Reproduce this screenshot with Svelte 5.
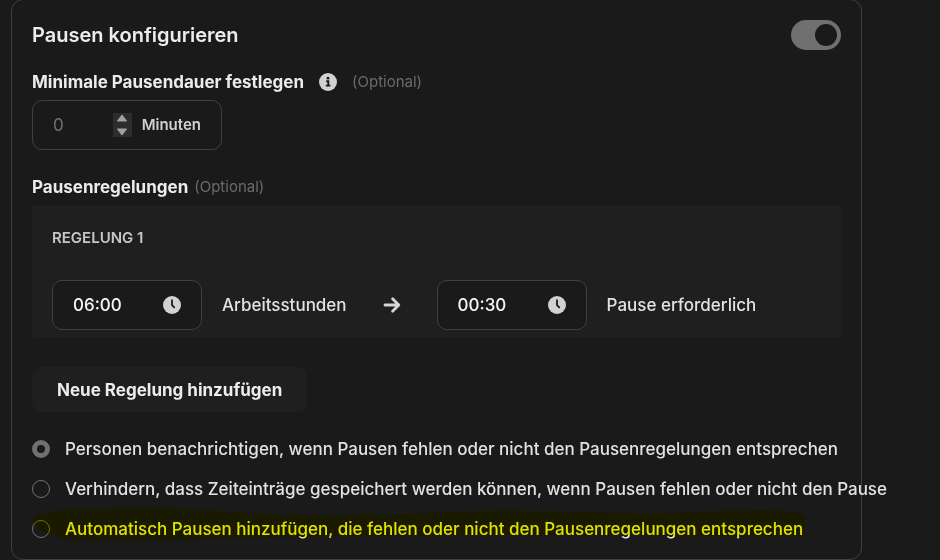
<script lang="ts">
	let enabled = $state(true);
	let minimum = $state<number | null>(null);
	let action = $state('notify');

	const rules = [{ hours: '06:00', pause: '00:30' }];

	const actions = [
		{
			value: 'notify',
			label: 'Personen benachrichtigen, wenn Pausen fehlen oder nicht den Pausenregelungen entsprechen'
		},
		{
			value: 'prevent',
			label: 'Verhindern, dass Zeiteinträge gespeichert werden können, wenn Pausen fehlen oder nicht den Pause'
		},
		{
			value: 'auto',
			label: 'Automatisch Pausen hinzufügen, die fehlen oder nicht den Pausenregelungen entsprechen',
			marked: true
		}
	];

	function step(amount: number) {
		minimum = Math.max(0, (minimum ?? 0) + amount);
	}
</script>

{#snippet timeField(value: string, label: string)}
	<div class="field time">
		<input type="text" {value} aria-label={label} />
		<svg class="icon" viewBox="0 0 18 18" aria-hidden="true">
			<circle cx="9" cy="9" r="9" fill="#d2d2d2" />
			<path d="M9 4.2V9.2L11.2 11.4" fill="none" stroke="#1a1a1a" stroke-width="1.8" stroke-linecap="round" stroke-linejoin="round" />
		</svg>
	</div>
{/snippet}

<div class="page">
	<section class="card">
		<header>
			<h2>Pausen konfigurieren</h2>
			<input class="toggle" type="checkbox" bind:checked={enabled} aria-label="Pausen konfigurieren" />
		</header>

		<div class="label-row">
			<label for="minimum">Minimale Pausendauer festlegen</label>
			<svg class="icon info" viewBox="0 0 18 18" aria-hidden="true">
				<circle cx="9" cy="9" r="9" fill="#d2d2d2" />
				<circle cx="9" cy="5.2" r="1.4" fill="#1a1a1a" />
				<path d="M7.2 8.2H9.3V12.6M6.8 12.6H11.4" fill="none" stroke="#1a1a1a" stroke-width="1.9" />
			</svg>
			<span class="optional">(Optional)</span>
		</div>
		<div class="field minutes">
			<input id="minimum" type="number" min="0" placeholder="0" bind:value={minimum} />
			<div class="stepper">
				<button type="button" aria-label="Mehr" onclick={() => step(1)}>
					<svg viewBox="0 0 12 8"><path d="M6 1L10.6 7H1.4Z" /></svg>
				</button>
				<button type="button" aria-label="Weniger" onclick={() => step(-1)}>
					<svg viewBox="0 0 12 8"><path d="M6 7L10.6 1H1.4Z" /></svg>
				</button>
			</div>
			<span class="unit">Minuten</span>
		</div>

		<div class="label-row rules-label">
			<h3>Pausenregelungen</h3>
			<span class="optional">(Optional)</span>
		</div>
		{#each rules as rule, i}
			<div class="rule">
				<h4>REGELUNG {i + 1}</h4>
				<div class="rule-row">
					{@render timeField(rule.hours, 'Arbeitsstunden')}
					<span>Arbeitsstunden</span>
					<svg class="arrow" viewBox="0 0 18 18" aria-hidden="true">
						<path d="M2 9H15.4M9.6 2.8L15.8 9L9.6 15.2" />
					</svg>
					{@render timeField(rule.pause, 'Pause erforderlich')}
					<span>Pause erforderlich</span>
				</div>
			</div>
		{/each}

		<button class="add" type="button">Neue Regelung hinzufügen</button>

		<div class="actions" role="radiogroup" aria-label="Pausenregelungen">
			{#each actions as item (item.value)}
				<label class="action">
					<input type="radio" name="action" value={item.value} bind:group={action} />
					<span>{item.label}</span>
					{#if item.marked}
						<svg class="marker" viewBox="0 0 790 36" preserveAspectRatio="none" aria-hidden="true">
							<path d="M2 10C14 5 30 2 60 2C110 1 160 1 205 5C260 9 320 8 380 7C440 3 520 3 600 6C650 8 690 3 745 3Q786 3 788 10V24Q788 30 780 30H680L600 28H420L300 30L180 32C120 34 70 34 40 33C28 32 26 28 14 26C4 22 0 14 2 10Z" />
						</svg>
					{/if}
				</label>
			{/each}
		</div>
	</section>
</div>

<style>
	:global(body) {
		background: #1a1a1a;
	}

	.page {
		height: 100vh;
		overflow: hidden;
		background: #1a1a1a;
		color: #e2e2e2;
		font-family: Inter, 'Liberation Sans', sans-serif;
		font-size: 17px;
		font-weight: 500;
		line-height: 24px;
	}

	.card {
		margin: -1px 78px 0 11px;
		padding: 20px 20px 18px;
		border: 1px solid #404040;
		border-radius: 12px;
	}

	header {
		display: flex;
		align-items: center;
		justify-content: space-between;
	}

	h2,
	h3,
	h4 {
		margin: 0;
		font-weight: 600;
	}

	h2 {
		font-size: 20px;
		color: #ececec;
	}

	h3,
	.label-row label {
		font-size: 17px;
		font-weight: 700;
		color: #ececec;
	}

	input,
	button {
		font: inherit;
		color: inherit;
		margin: 0;
		padding: 0;
		border: 0;
		background: none;
	}

	/* toggle switch */
	.toggle {
		appearance: none;
		display: flex;
		align-items: center;
		width: 50px;
		height: 30px;
		padding: 0 4px;
		box-sizing: border-box;
		border-radius: 15px;
		background: #707070;
	}

	.toggle::before {
		content: '';
		width: 22px;
		height: 22px;
		border-radius: 50%;
		background: #1a1a1a;
	}

	.toggle:checked {
		justify-content: flex-end;
	}

	.label-row {
		display: flex;
		align-items: center;
		margin: 20px 0 6px;
	}

	.rules-label {
		margin-top: 25px;
		gap: 6px;
	}

	.icon {
		flex: none;
		width: 18px;
		height: 18px;
	}

	.info {
		margin: 0 15px;
	}

	.optional {
		font-size: 15px;
		font-weight: 400;
		color: #6a6a6a;
	}

	/* bordered inputs */
	.field {
		display: flex;
		align-items: center;
		box-sizing: border-box;
		height: 50px;
		padding: 0 20px;
		border: 1px solid #404040;
		border-radius: 10px;
		background: #1a1a1a;
	}

	.field input {
		min-width: 0;
		flex: 1;
		outline: none;
	}

	.minutes {
		width: 190px;
	}

	.minutes input {
		appearance: textfield;
		font-weight: 400;
	}

	.minutes input::placeholder {
		color: #707070;
	}

	.stepper {
		display: flex;
		flex-direction: column;
		justify-content: space-between;
		width: 19px;
		height: 24px;
		margin-right: 10px;
		background: #2d2d2d;
	}

	.stepper button {
		display: flex;
		justify-content: center;
		align-items: center;
		height: 10px;
	}

	.stepper svg {
		width: 12px;
		height: 8px;
		fill: #a0a0a0;
		stroke: #a0a0a0;
		stroke-linejoin: round;
	}

	.unit {
		font-size: 15px;
		font-weight: 600;
		color: #d0d0d0;
	}

	.time {
		width: 150px;
		color: #f4f4f4;
	}

	.rule {
		padding: 21px 20px 7px;
		background: #1f1f1f;
		border-radius: 2px;
	}

	h4 {
		font-size: 15px;
		color: #c6c6c6;
	}

	.rule-row {
		display: flex;
		align-items: center;
		gap: 20px;
		margin-top: 30px;
		white-space: nowrap;
	}

	.arrow {
		width: 18px;
		height: 18px;
		margin: 0 16px;
		fill: none;
		stroke: #d6d6d6;
		stroke-width: 2.8;
		stroke-linecap: round;
		stroke-linejoin: round;
	}

	.add {
		display: block;
		height: 45px;
		margin-top: 30px;
		padding: 0 25px;
		border-radius: 10px;
		background: #1f1f1f;
		color: #ececec;
		font-weight: 700;
	}

	.actions {
		display: flex;
		flex-direction: column;
		align-items: flex-start;
		gap: 16px;
		margin-top: 25px;
	}

	.action {
		position: relative;
		display: flex;
		align-items: center;
		gap: 15px;
		white-space: nowrap;
	}

	.action input {
		appearance: none;
		flex: none;
		width: 18px;
		height: 18px;
		box-sizing: border-box;
		border: 1px solid #707070;
		border-radius: 50%;
	}

	.action input:checked {
		border-width: 5px;
	}

	/* highlighter stroke over the last option */
	.marker {
		position: absolute;
		left: 0;
		top: -10px;
		width: calc(100% + 4px);
		height: 36px;
		fill: #ffff00;
		mix-blend-mode: multiply;
		pointer-events: none;
	}
</style>
